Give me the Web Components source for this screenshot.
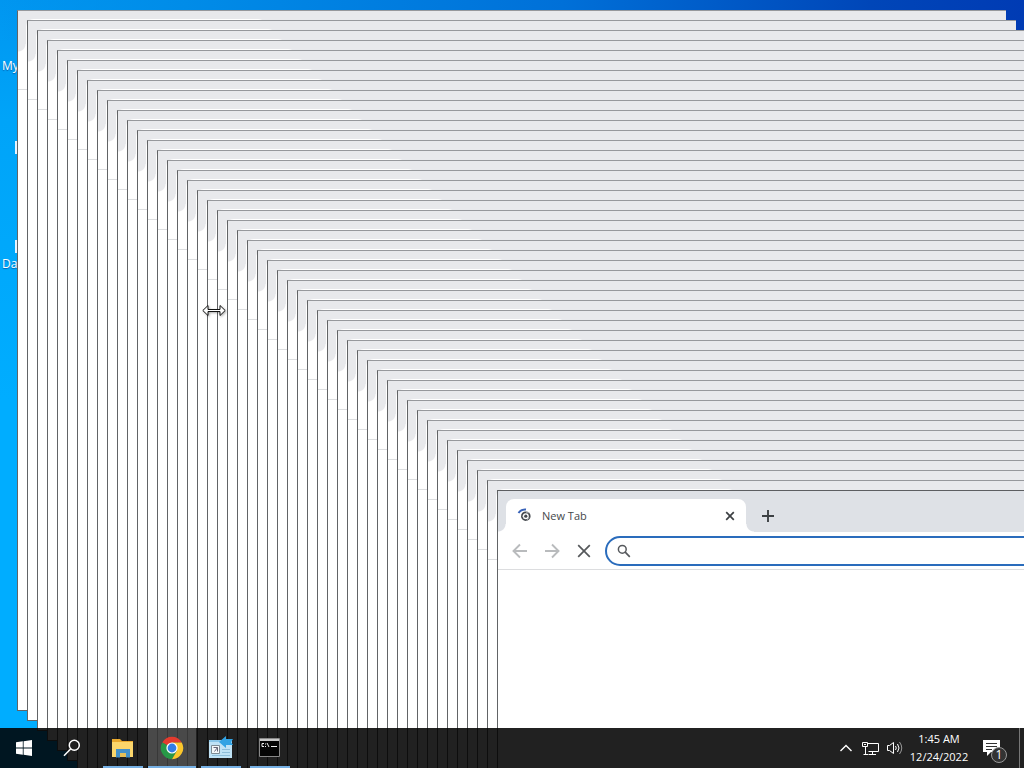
<!DOCTYPE html>
<html lang="en">
<head>
<meta charset="utf-8">
<title>Desktop</title>
<style>
html,body{margin:0;height:100%;overflow:hidden}
body{font-family:"Open Sans","Noto Sans",sans-serif;font-size:12px}
</style>
</head>
<body>
<desk-top>
  <desk-icon style="--top:58px">My</desk-icon>
  <desk-icon style="--top:256px">Da</desk-icon>
  <window-stack slot="windows" count="49"></window-stack>
  <resize-cursor slot="windows"></resize-cursor>
  <task-bar slot="taskbar"></task-bar>
</desk-top>

<template id="t-desk-top">
<style>
:host{display:flex;flex-direction:column;position:relative;height:100vh;overflow:hidden;
 background:linear-gradient(to bottom,#0096f0 0,#00a4f8 120px,#00adff 400px,#00adff 100%)}
.sky{position:absolute;top:0;left:0;right:0;height:40px;background:linear-gradient(to right,#0092ec00 0,#008ce8 18%,#0070d8 55%,#0046b8 85%,#003bb4)}
.grow{flex:1}
.slivers i{position:absolute;left:15px;width:2px;height:13px;background:#e8f4ff}
.slivers i:first-child{top:141px}
.slivers i:last-child{top:240px}
</style>
<div class="sky"></div>
<div class="slivers"><i></i><i></i></div>
<slot></slot>
<slot name="windows"></slot>
<div class="grow"></div>
<slot name="taskbar"></slot>
</template>

<template id="t-desk-icon">
<style>
:host{position:absolute;left:2px;top:var(--top);line-height:16px;color:#fff;text-shadow:0 1px 1px #0046}
</style>
<slot></slot>
</template>

<template id="t-window-stack">
<style>
:host{position:absolute;inset:0;overflow:hidden}
browser-window{position:absolute;left:calc(17px + var(--i)*10px);top:calc(10px + var(--i)*10px)}
</style>
</template>

<template id="t-browser-window">
<style>
:host{display:flex;flex-direction:column;box-sizing:border-box;width:989px;height:701px;
 background:#fff;border:1px solid #626466;border-top-color:#96989c;border-right:0;--strip:#e8e9ec}
:host([active]){--strip:#dee1e6;border-top-color:#5c5e61}
.strip{display:flex;background:var(--strip);padding:8px 8px 0;height:33px;flex:none}
.tab{position:relative;display:flex;align-items:center;box-sizing:border-box;width:240px;
 background:#fff;border-radius:8px 8px 0 0;padding:0 8px 0 11px;color:#45474a;font-size:11px}
.tab::before,.tab::after{content:"";position:absolute;bottom:0;width:8px;height:8px}
.tab::before{right:100%;background:radial-gradient(circle at 0 0,#0000 7px,#fff 8px)}
.tab::after{left:100%;background:radial-gradient(circle at 100% 0,#0000 7px,#fff 8px)}
.title{flex:1;padding-left:9px}
button{display:grid;place-items:center;border:0;padding:0;background:none;color:#3c4043}
.close{width:16px;height:16px}
.plus{width:28px;height:33px;margin-left:8px}
.bar{display:flex;height:37px;flex:none;box-sizing:border-box;padding:4px 8px 0 6px}
.bar button{width:32px;height:30px;color:#55585b}
.bar button:disabled{color:#b9bbbd}
.line{height:1px;background:#dcdddf;flex:none}
.omni{display:flex;align-items:center;flex:1;box-sizing:border-box;height:30px;margin-left:5px;
 border:2px solid #2a6cbc;border-radius:15px;padding:0 10px;color:#55585c}
input{flex:1;border:0;outline:0;background:none;font:inherit;margin-left:8px}
svg{display:block;fill:none;stroke:currentColor}
</style>
<div class="strip"><div class="tab"></div></div>
<div class="bar"></div>
<div class="line"></div>
</template>

<template id="t-tab">
<svg width="16" height="16" viewBox="0 0 16 16"><path d="M1.500 5A8 8 0 0 1 9 1.500" stroke="#3862b8" stroke-width="2"/><circle cx="8.800" cy="8.200" r="3.900" stroke="#44484d" stroke-width="1.800"/><circle cx="8.800" cy="8.200" r="1.600" fill="#44484d" stroke="none"/><path d="M9 4.700h3.500M5.200 7.500l2 3.200M12 9.500l-2.200 3" stroke="#c7c9cc" stroke-width=".7"/></svg>
<span class="title">New Tab</span>
<button class="close" aria-label="Close tab"><svg width="16" height="16" viewBox="0 0 16 16"><path d="M4.200 4.200l7.600 7.600M11.800 4.200l-7.600 7.600" stroke-width="1.700"/></svg></button>
</template>

<template id="t-bar">
<button disabled aria-label="Back"><svg width="16" height="16" viewBox="0 0 16 16"><path d="M15 8H2M8 1.500L1.500 8 8 14.500" stroke-width="1.900"/></svg></button>
<button disabled aria-label="Forward"><svg width="16" height="16" viewBox="0 0 16 16"><path d="M1 8h13M8 1.500L14.500 8 8 14.500" stroke-width="1.900"/></svg></button>
<button aria-label="Stop"><svg width="16" height="16" viewBox="0 0 16 16"><path d="M2.200 2.200l11.600 11.600M13.800 2.200L2.200 13.800" stroke-width="1.700"/></svg></button>
<label class="omni"><svg width="14" height="14" viewBox="0 0 14 14"><circle cx="5.300" cy="5.300" r="3.900" stroke-width="1.500"/><path d="M8.200 8.200l4.600 4.600" stroke-width="1.700"/></svg><input type="text" aria-label="Address and search bar"></label>
</template>

<template id="t-resize-cursor">
<style>
:host{position:absolute;left:202px;top:304px}
svg{display:block;filter:drop-shadow(1px 1px 1px #0005)}
</style>
<svg width="24" height="13" viewBox="0 0 24 13"><path d="M.8 6.500L6 1.500V5.500H18V1.500L23.200 6.500 18 11.500V7.500H6V11.500Z" fill="#fff" stroke="#111"/></svg>
</template>

<template id="t-task-bar">
<style>
:host{display:flex;position:relative;height:40px;background:rgba(0,0,0,.87);color:#fff}
.apps{display:flex;gap:1px;margin-left:3px}
.space{flex:1}
button{display:grid;place-items:center;border:0;padding:0;background:none;color:inherit;font:inherit}
.start{width:48px}
.tray{display:flex;align-items:center}
.tray button{height:40px}
.up,.net,.vol{width:24px}
.clock{width:66px;line-height:18px;font-size:11px;display:block}
.note{position:relative;width:38px}
.badge{position:absolute;left:19px;top:19px;width:16px;height:16px;box-sizing:border-box;border:1px solid #999;border-radius:50%;background:#333;line-height:14px;text-align:center}
.show{width:5px;height:40px;box-sizing:border-box;border-left:1px solid #777;margin-left:9px}
svg{display:block;fill:none;stroke:currentColor}
.apps svg{stroke:none}
</style>
<button class="start" aria-label="Start"><svg width="16" height="16" viewBox="0 0 16 16"><path d="M0 2.300L6.800 1.300V7.500H0ZM7.600 1.200L16 0V7.500H7.600ZM0 8.400H6.800V14.700L0 13.700ZM7.600 8.400H16V16L7.600 14.800Z" fill="#fff" stroke="none"/></svg></button>
<button class="start" aria-label="Search"><svg width="18" height="18" viewBox="0 0 18 18"><circle cx="11.300" cy="6.300" r="5" stroke-width="1.500"/><path d="M7.600 10L1 16.700" stroke-width="1.500"/></svg></button>
<div class="apps">
<task-button label="File Explorer"><svg width="24" height="24" viewBox="0 0 24 24"><path d="M1 3h8l2 2h11v3H1z" fill="#e9a92e"/><path d="M1 6h21v15H1z" fill="#fbd66b"/><path d="M5 21.500v-8.500h14v8.500h-4V17H9v4.500z" fill="#4390c9"/><path d="M9 21v-4h6v4z" fill="#e6bf58"/></svg></task-button>
<task-button label="Google Chrome" current><svg width="24" height="24" viewBox="0 0 24 24"><path d="M12 12L2.300 6.400A11.200 11.200 0 0 1 21.700 6.400H12z" fill="#e33b2e"/><path d="M12 12L2.300 6.400A11.200 11.200 0 0 0 12 23.200L16.900 14.800z" fill="#279847"/><path d="M12 6.400H21.700A11.200 11.200 0 0 1 12 23.200L16.900 14.800z" fill="#fbc62c"/><circle cx="12" cy="12" r="5.600" fill="#fff"/><circle cx="12" cy="12" r="4.400" fill="#337de5"/></svg></task-button>
<task-button label="Remote Tools"><svg width="24" height="24" viewBox="0 0 24 24"><path d="M0 4h23v18H0z" fill="#bfe2f5"/><path d="M0 4h23v2H0z" fill="#8ac6e8"/><path d="M2.500 9.500h8v8h-8z" fill="#f3f7f9" stroke="#7d8b94"/><path d="M4.500 11.500h4l-3 4M8.500 11.500v4" fill="none" stroke="#667"/><path d="M13 13.500h8M13 16.500h8M3 19.500h18" fill="none" stroke="#8dbdd9"/><path d="M10 6l7-6v3h7l-2 3 2 3h-7v3z" fill="#31a2e3"/></svg></task-button>
<task-button label="Command Prompt"><svg width="24" height="24" viewBox="0 0 24 24"><path d="M1.500 2.500h20v18h-20z" fill="#050505" stroke="#888"/><path d="M2 3h19v2H2z" fill="#c9c9c9"/><path d="M6 7.500H4v3h2M7.500 7.500v1M7.500 10v1M9 7l2 4M13 10.500h6" fill="none" stroke="#eee"/></svg></task-button>
</div>
<div class="space"></div>
<div class="tray">
<button class="up" aria-label="Show hidden icons"><svg width="14" height="8" viewBox="0 0 14 8"><path d="M1.500 7L7 1.500 12.500 7" stroke-width="1.400"/></svg></button>
<button class="net" aria-label="Network"><svg width="17" height="15" viewBox="0 0 17 15"><path d="M5.500 2.500h11v8h-10M10.500 10.500v3M7 13.500h7M.5 1.500h5v4h-5zM3.500 5.500v8M1.500 13.500h5M2 3.500h2"/></svg></button>
<button class="vol" aria-label="Volume"><svg width="17" height="14" viewBox="0 0 17 14"><path d="M1.500 4.500h2l4-3v11l-4-3h-2zM9.500 5q1.500 2 0 4M11.500 3q3 4 0 8"/><path d="M13.500 1q4.500 6 0 12" stroke="#999"/></svg></button>
<button class="clock"><span>1:45 AM</span><br><span>12/24/2022</span></button>
<button class="note" aria-label="Notifications"><svg width="17" height="16" viewBox="0 0 17 16"><path d="M0 0h17v12H8l-4 4v-4H0z" fill="#fff" stroke="none"/><path d="M3 3.500h11M3 6.500h11M3 9.500h6" stroke="#333"/></svg><span class="badge">1</span></button>
<div class="show"></div>
</div>
</template>

<template id="t-task-button">
<style>
:host{display:block;width:48px;height:40px}
button{display:flex;flex-direction:column;align-items:center;width:100%;height:100%;border:0;padding:8px 0 0;background:none}
i{display:block;width:40px;height:2px;margin-top:auto;background:#76b0e4}
:host([current]) button{background:rgba(255,255,255,.18)}
:host([current]) i{width:100%}
</style>
<button><slot></slot><i></i></button>
</template>

<script>
const stamp = (root, name) =>
  root.append(document.getElementById('t-' + name).content.cloneNode(true));

class Base extends HTMLElement {
  constructor() {
    super();
    stamp(this.attachShadow({ mode: 'open' }), this.localName);
  }
}
customElements.define('desk-top', class extends Base {});
customElements.define('desk-icon', class extends Base {});
customElements.define('resize-cursor', class extends Base {});
customElements.define('task-button', class extends Base {
  connectedCallback() {
    this.shadowRoot.querySelector('button').setAttribute('aria-label', this.getAttribute('label'));
  }
});
customElements.define('task-bar', class extends Base {});

// Only the active window carries its tab content and toolbar controls.
customElements.define('browser-window', class extends Base {
  connectedCallback() {
    if (!this.hasAttribute('active')) return;
    const root = this.shadowRoot;
    stamp(root.querySelector('.tab'), 'tab');
    stamp(root.querySelector('.bar'), 'bar');
    const plus = document.createElement('button');
    plus.className = 'plus';
    plus.setAttribute('aria-label', 'New tab');
    plus.innerHTML = '<svg width="14" height="14" viewBox="0 0 14 14"><path d="M7 1v12M1 7h12" stroke-width="1.9"/></svg>';
    root.querySelector('.strip').append(plus);
  }
});

// Cascade of windows, each shifted by one step from the one below.
customElements.define('window-stack', class extends Base {
  connectedCallback() {
    const n = Number(this.getAttribute('count'));
    for (let i = 0; i < n; i++) {
      const w = document.createElement('browser-window');
      w.style.setProperty('--i', i);
      if (i === n - 1) w.setAttribute('active', '');
      this.shadowRoot.append(w);
    }
  }
});
</script>
</body>
</html>
